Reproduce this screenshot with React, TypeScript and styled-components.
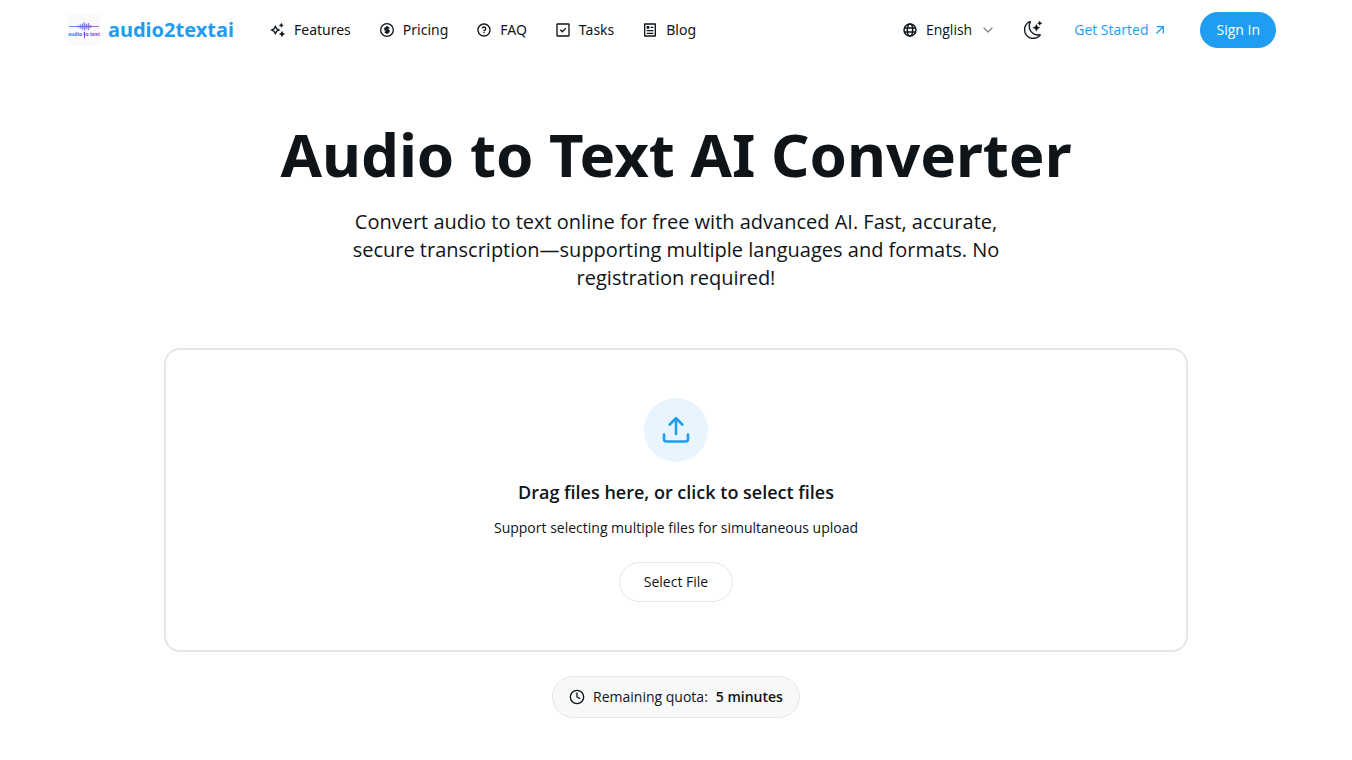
import React from "react";
import styled, { createGlobalStyle } from "styled-components";
import { RiSparkling2Line, RiQuestionLine, RiArticleLine, RiArrowRightUpLine } from "react-icons/ri";
import { BsMoonStars } from "react-icons/bs";
import { Clock, ChevronDown } from "lucide-react";

const GlobalStyle = createGlobalStyle`
  *, *::before, *::after { box-sizing: border-box; }
  body {
    margin: 0;
    background: #fff;
    color: #0f1419;
    font-family: "Open Sans", "Noto Sans", sans-serif;
    font-size: 14px;
    line-height: 20px;
  }
  button, select { font: inherit; color: inherit; cursor: pointer; }
  a { color: inherit; text-decoration: none; }
  h1, h2, p { margin: 0; }
`;

const Header = styled.header`
  display: flex;
  align-items: center;
  justify-content: space-between;
  width: 100%;
  max-width: 1280px;
  height: 60px;
  margin: 0 auto;
  padding: 0 40px 0 32px;
`;

const HeaderGroup = styled.div<{ $gap: number }>`
  display: flex;
  align-items: center;
  gap: ${(p) => p.$gap}px;
`;

const Brand = styled.a`
  display: flex;
  align-items: center;
  gap: 8px;
  color: #1e9df1;
  font-family: "Noto Sans", "Open Sans", sans-serif;
  font-size: 20px;
  font-weight: 700;
  line-height: 28px;
`;

const Nav = styled.nav`
  display: flex;
  gap: 28px;
  font-family: "Noto Sans", "Open Sans", sans-serif;
`;

const NavLink = styled.a`
  display: flex;
  align-items: center;
  gap: 8px;
`;

const Language = styled.label`
  display: flex;
  align-items: center;
  gap: 8px;
`;

const LanguageSelect = styled.select`
  appearance: none;
  field-sizing: content;
  border: 0;
  padding: 0;
  background: transparent;
`;

const IconButton = styled.button`
  display: flex;
  border: 0;
  padding: 0;
  background: transparent;
`;

const StartLink = styled.a`
  display: flex;
  align-items: center;
  gap: 4px;
  padding: 0 4px;
  color: #1e9df1;
`;

const SignInButton = styled.button`
  height: 36px;
  padding: 0 16px;
  border: 0;
  border-radius: 18px;
  background: #1e9df1;
  color: #fff;
`;

const Main = styled.main`
  display: flex;
  flex-direction: column;
  align-items: center;
  max-width: 1088px;
  margin: 0 auto;
  padding: 64px 32px 40px;
  text-align: center;
`;

const Title = styled.h1`
  font-family: "Noto Sans", "Open Sans", sans-serif;
  font-size: 60px;
  font-weight: 700;
  line-height: 60px;
`;

const Lead = styled.p`
  max-width: 672px;
  margin-top: 24px;
  font-size: 20px;
  line-height: 28px;
`;

const DropZone = styled.section`
  display: flex;
  flex-direction: column;
  align-items: center;
  width: 100%;
  margin-top: 56px;
  padding: 48px;
  border: 2px solid #e1e8ea;
  border-radius: 16px;
`;

const UploadBadge = styled.div`
  display: grid;
  place-items: center;
  width: 64px;
  height: 64px;
  border-radius: 50%;
  background: #e8f5fe;
  color: #1e9df1;
`;

const DropTitle = styled.h2`
  margin-top: 16px;
  font-size: 18px;
  font-weight: 600;
  line-height: 28px;
`;

const DropHint = styled.p`
  margin-top: 12px;
`;

const SelectFileButton = styled.button`
  height: 40px;
  margin-top: 24px;
  padding: 0 24px;
  border: 1px solid #e5e7e8;
  border-radius: 20px;
  background: #fff;
`;

const Quota = styled.div`
  display: flex;
  align-items: center;
  gap: 8px;
  height: 42px;
  margin-top: 24px;
  padding: 0 16px;
  border: 1px solid #e5e7e8;
  border-radius: 21px;
  background: #f7f8f8;
`;

const QuotaValue = styled.strong`
  font-weight: 600;
`;

const Logo = () => (
  <svg width="32" height="32" viewBox="0 0 32 32" aria-hidden="true">
    <defs>
      <linearGradient id="wave" gradientUnits="userSpaceOnUse" x1="0" x2="32" y1="0" y2="0">
        <stop offset="0" stopColor="#2f8df0" />
        <stop offset="0.5" stopColor="#5b57d8" />
        <stop offset="1" stopColor="#a03fd0" />
      </linearGradient>
    </defs>
    <rect width="32" height="32" fill="#fafafa" />
    <path d="M1 12.5h30" stroke="url(#wave)" strokeWidth="0.8" />
    <path
      d="M10.5 11.5v2M12.5 10.5v4M14.5 9.5v6M16.5 8.5v8M18.5 10v5M20.5 9v7M22.5 11v3"
      stroke="url(#wave)"
      strokeWidth="1.5"
      opacity="0.7"
    />
    <path d="M16.5 18v6" stroke="#7048d0" strokeWidth="1" />
    <text x="16" y="22" textAnchor="middle" fontFamily="Open Sans" fontSize="5" fontWeight="700" fill="url(#wave)">
      audio to text
    </text>
  </svg>
);

const CoinIcon = () => (
  <svg width="16" height="16" viewBox="0 0 24 24" fill="none" stroke="currentColor" strokeWidth="2" aria-hidden="true">
    <circle cx="12" cy="12" r="9.5" />
    <path strokeWidth="2.6" d="M15.5 8.8h-5a1.6 1.6 0 0 0 0 3.2h3a1.6 1.6 0 0 1 0 3.2h-5M12 6v12" />
  </svg>
);

const TaskIcon = () => (
  <svg width="16" height="16" viewBox="0 0 24 24" fill="none" stroke="currentColor" strokeWidth="2" aria-hidden="true">
    <rect x="3" y="3" width="18" height="18" rx="0.6" />
    <path d="M8 11.6l3 3 5.2-5.4" />
  </svg>
);

const GlobeIcon = () => (
  <svg width="16" height="16" viewBox="0 0 24 24" fill="none" stroke="currentColor" strokeWidth="2.2" aria-hidden="true">
    <circle cx="12" cy="12" r="9" />
    <ellipse cx="12" cy="12" rx="4" ry="9" />
    <path d="M3.6 9h16.8M3.6 15h16.8" />
  </svg>
);

const UploadIcon = () => (
  <svg width="32" height="32" viewBox="0 0 32 32" fill="none" stroke="currentColor" strokeWidth="2.6" strokeLinecap="round" strokeLinejoin="round" aria-hidden="true">
    <path d="M4 20.5V25a2.5 2.5 0 0 0 2.5 2.5h19a2.5 2.5 0 0 0 2.5-2.5v-4.5M9.7 10.5L16 4.2l6.3 6.3M16 4.2V20" />
  </svg>
);

const links = [
  { label: "Features", icon: <RiSparkling2Line size={16} /> },
  { label: "Pricing", icon: <CoinIcon /> },
  { label: "FAQ", icon: <RiQuestionLine size={16} /> },
  { label: "Tasks", icon: <TaskIcon /> },
  { label: "Blog", icon: <RiArticleLine size={16} /> },
];

export default function App() {
  return (
    <>
      <GlobalStyle />
      <Header>
        <HeaderGroup $gap={36}>
          <Brand href="#">
            <Logo />
            audio2textai
          </Brand>
          <Nav>
            {links.map(({ label, icon }) => (
              <NavLink href="#" key={label}>
                {icon}
                {label}
              </NavLink>
            ))}
          </Nav>
        </HeaderGroup>
        <HeaderGroup $gap={28}>
          <Language>
            <GlobeIcon />
            <LanguageSelect aria-label="Language">
              <option>English</option>
            </LanguageSelect>
            <ChevronDown size={16} color="#87898c" />
          </Language>
          <IconButton aria-label="Toggle theme">
            <BsMoonStars size={18} strokeWidth={0.2} />
          </IconButton>
          <StartLink href="#">
            Get Started
            <RiArrowRightUpLine size={16} />
          </StartLink>
          <SignInButton>Sign In</SignInButton>
        </HeaderGroup>
      </Header>
      <Main>
        <Title>Audio to Text AI Converter</Title>
        <Lead>
          Convert audio to text online for free with advanced AI. Fast, accurate, secure transcription—supporting
          multiple languages and formats. No registration required!
        </Lead>
        <DropZone>
          <UploadBadge>
            <UploadIcon />
          </UploadBadge>
          <DropTitle>Drag files here, or click to select files</DropTitle>
          <DropHint>Support selecting multiple files for simultaneous upload</DropHint>
          <SelectFileButton>Select File</SelectFileButton>
        </DropZone>
        <Quota>
          <Clock size={16} />
          <span>Remaining quota:</span>
          <QuotaValue>5 minutes</QuotaValue>
        </Quota>
      </Main>
    </>
  );
}
